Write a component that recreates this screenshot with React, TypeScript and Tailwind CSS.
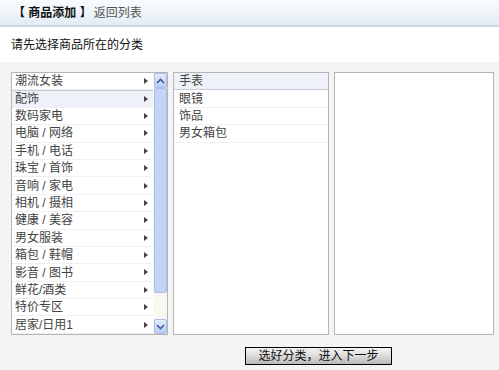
const categories = [
  '潮流女装',
  '配饰',
  '数码家电',
  '电脑 / 网络',
  '手机 / 电话',
  '珠宝 / 首饰',
  '音响 / 家电',
  '相机 / 摄相',
  '健康 / 美容',
  '男女服装',
  '箱包 / 鞋帽',
  '影音 / 图书',
  '鲜花/酒类',
  '特价专区',
  '居家/日用1',
];

const subs = ['手表', '眼镜', '饰品', '男女箱包'];

function Caret() {
  return (
    <svg width="4" height="6" viewBox="0 0 4 6">
      <path d="M0 0 L4 3 L0 6 Z" fill="#444" />
    </svg>
  );
}

function ScrollBtn({ up }: { up?: boolean }) {
  return (
    <div className="flex h-[15px] w-[13px] items-center justify-center rounded-[2px] border border-[#a9bde6] bg-gradient-to-b from-[#e4ecfc] to-[#b9cdf3]">
      <svg width="9" height="6" viewBox="0 0 9 6">
        <path
          d={up ? 'M1 5 L4.5 1.5 L8 5' : 'M1 1 L4.5 4.5 L8 1'}
          fill="none"
          stroke="#3b5a9a"
          strokeWidth="1.6"
        />
      </svg>
    </div>
  );
}

export default function App() {
  return (
    <div
      className="flex h-[370px] w-[499px] flex-col bg-[#f4f4f4] text-[12px] text-[#222]"
      style={{ fontFamily: '"Liberation Sans", "Noto Sans CJK SC", sans-serif' }}
    >
      <div className="flex h-[27px] items-center border-b-2 border-[#c9d7e1] bg-gradient-to-b from-[#fafcfd] to-[#e3ecf4] pl-[13px]">
        <span className="font-bold text-[#111]">【 商品添加 】</span>
        <span className="ml-[2px] text-[#555]">返回列表</span>
      </div>
      <div className="flex h-[35px] items-center bg-white pl-[11px] text-[#111]">请先选择商品所在的分类</div>

      <div className="mt-[10px] flex gap-[5px] pl-[11px]">
        <div className="flex h-[263px] w-[157px] border border-[#b5b5b5] bg-white">
          <div className="flex flex-1 flex-col">
            {categories.map((c, i) => (
              <div
                key={c}
                className={`flex h-[17.4px] items-center justify-between border-b border-[#eef0f2] pl-[3px] pr-[5px] ${
                  i === 1 ? 'border-t border-t-[#c4ccd6] bg-[#eef2f8]' : ''
                }`}
              >
                <span className="text-[#444]">{c}</span>
                <Caret />
              </div>
            ))}
          </div>
          <div className="flex w-[14px] flex-col items-center bg-[#f9f7f2]">
            <ScrollBtn up />
            <div className="h-[205px] w-[13px] rounded-[2px] border border-[#a9bde6] bg-[#c3d4f7]" />
            <div className="flex-1" />
            <ScrollBtn />
          </div>
        </div>

        <div className="flex h-[263px] w-[156px] flex-col border border-[#b5b5b5] bg-white">
          {subs.map((s, i) => (
            <div
              key={s}
              className={`flex h-[17.4px] items-center border-b border-[#eef0f2] pl-[5px] text-[#444] ${
                i === 0 ? 'border-b-[#c4ccd6] bg-[#eef2f8]' : ''
              }`}
            >
              {s}
            </div>
          ))}
        </div>

        <div className="h-[263px] w-[160px] border border-[#b5b5b5] bg-white" />
      </div>

      <div className="mt-[12px] flex pl-[245px]">
        <button className="flex h-[18px] w-[147px] items-center justify-center border border-black bg-gradient-to-b from-[#f4f4f4] via-[#dcdcdc] to-[#b8b8b8] text-[12px] leading-none text-[#111]">
          选好分类，进入下一步
        </button>
      </div>
    </div>
  );
}
